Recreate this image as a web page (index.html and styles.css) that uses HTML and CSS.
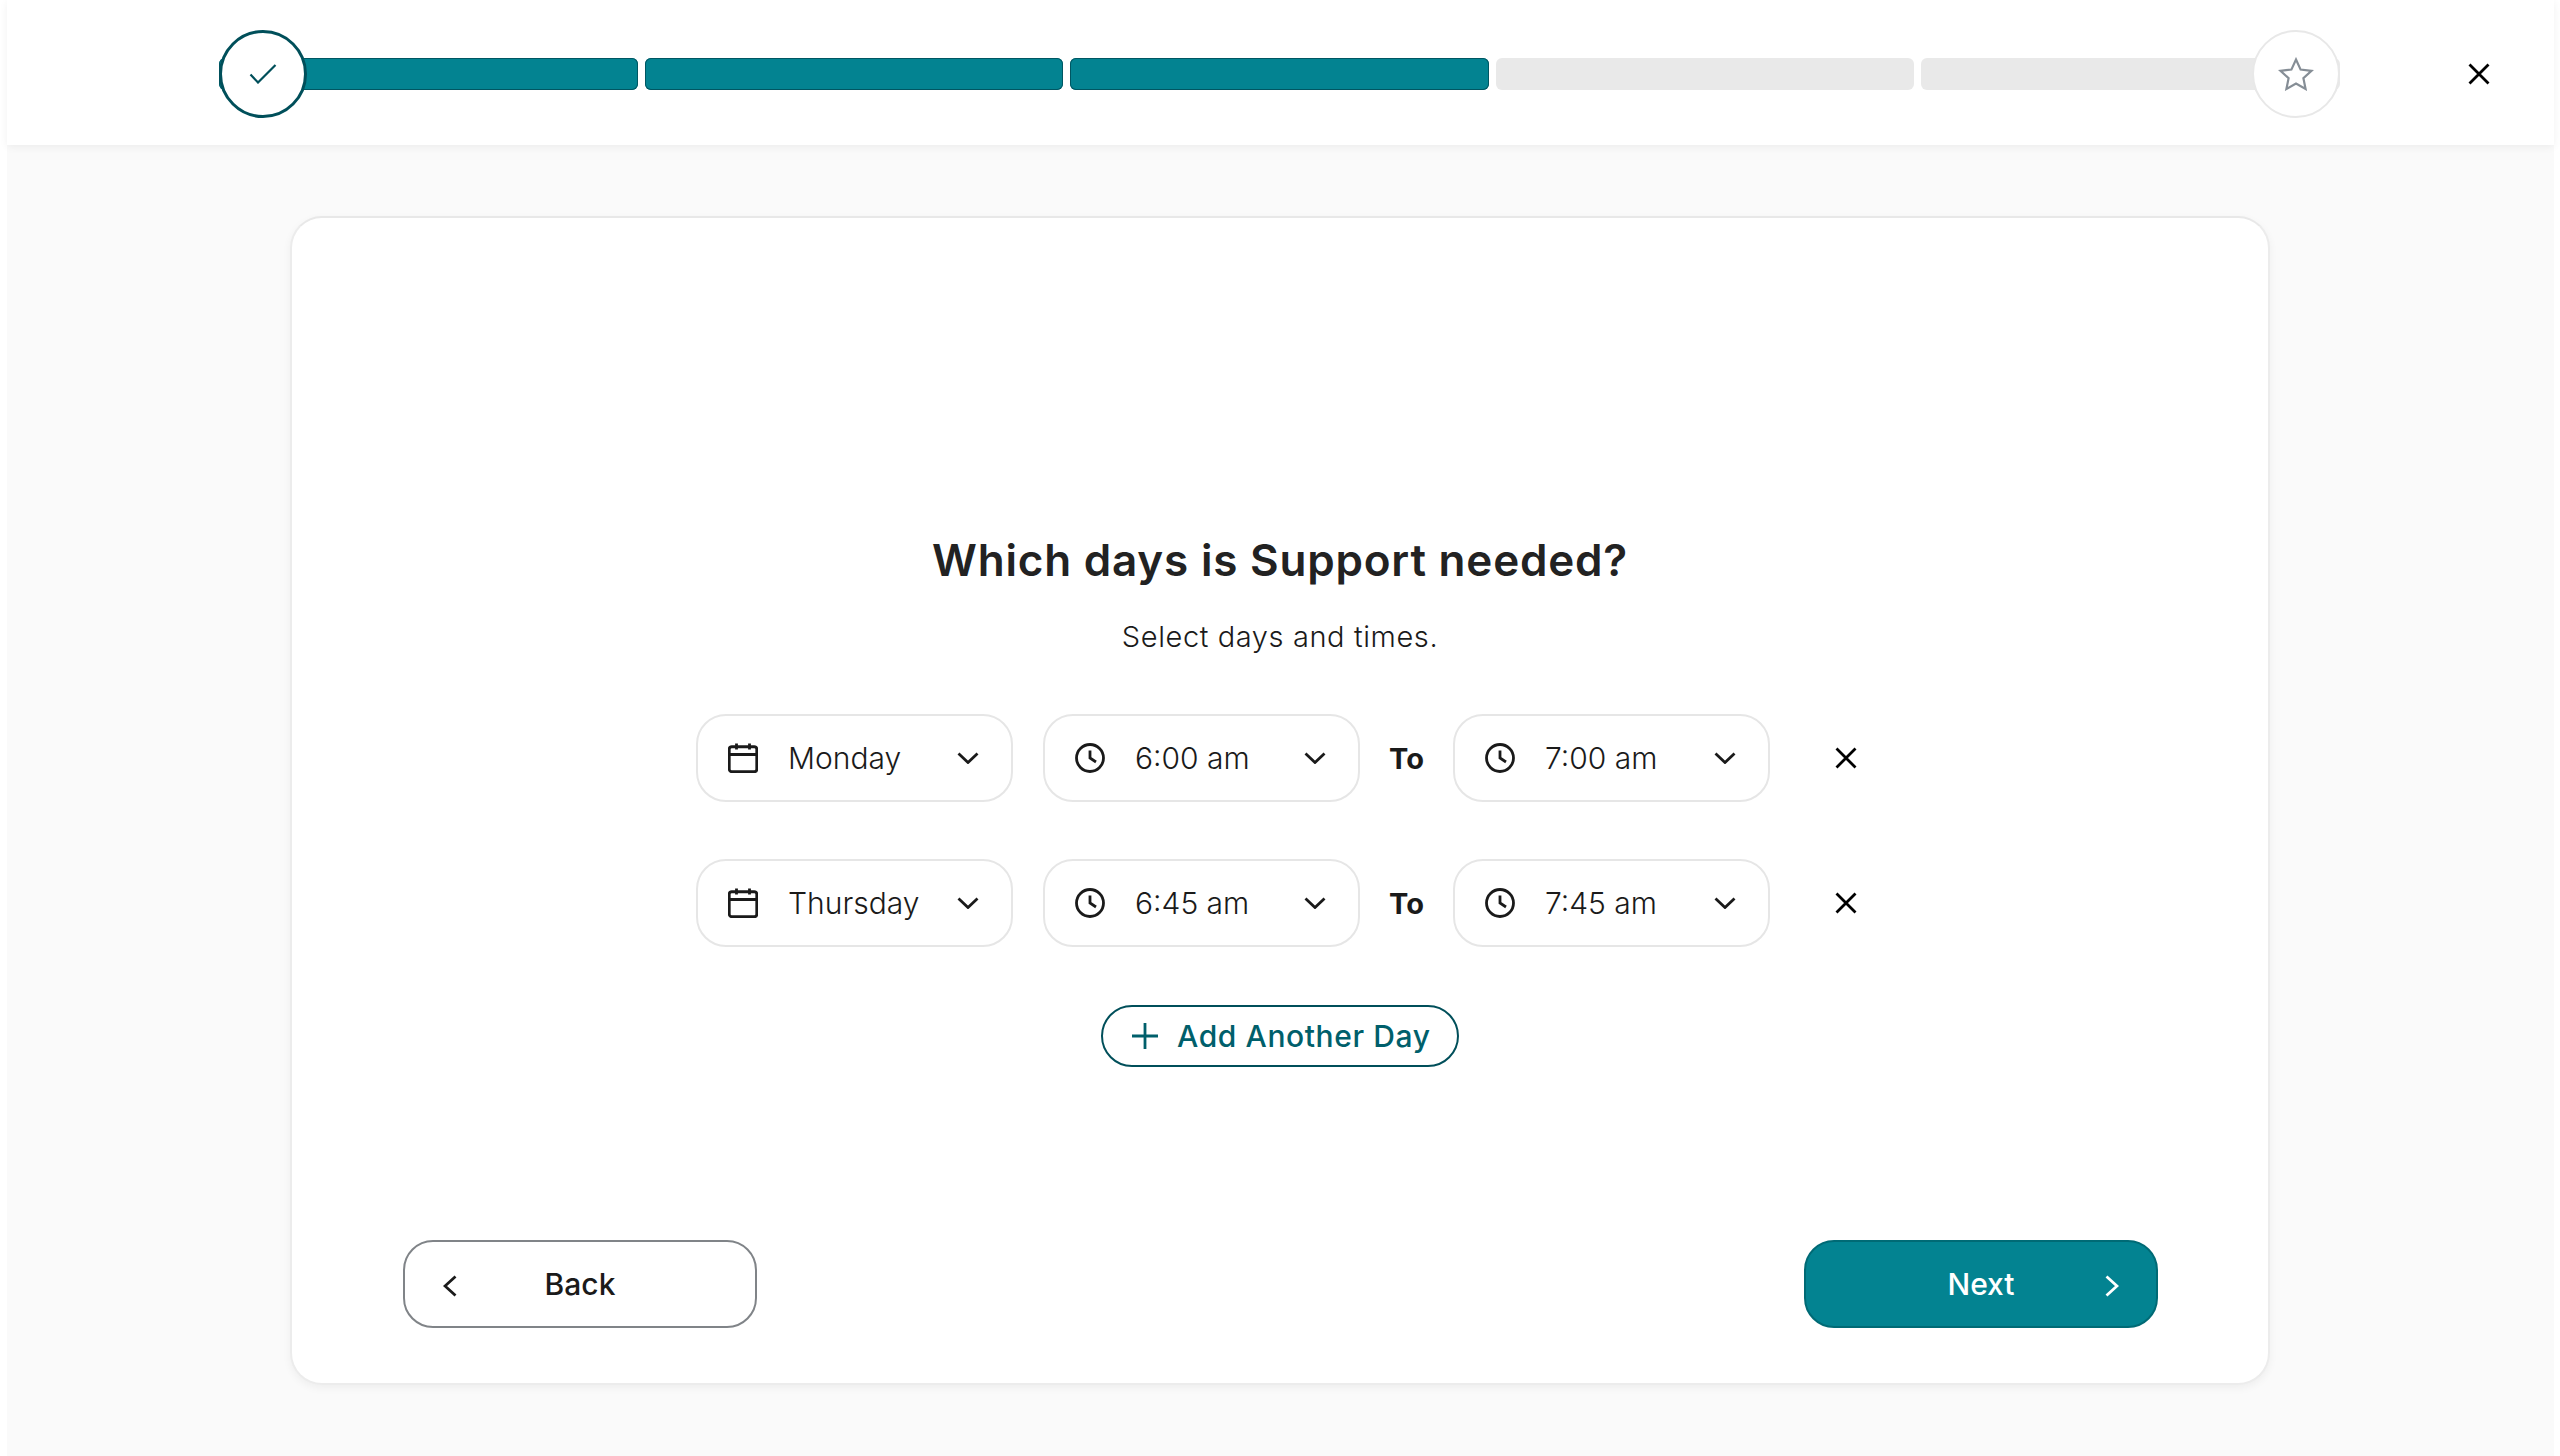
FILE: index.html
```html
<!DOCTYPE html>
<html lang="en">
<head>
    <meta charset="UTF-8">
    <meta name="viewport" content="width=device-width, initial-scale=1.0">
    <title>Which days is Support needed?</title>
    <link rel="stylesheet" href="styles.css">
</head>
<body>

<!-- Shared icons -->
<svg class="icon-defs" aria-hidden="true">
    <symbol id="i-calendar" viewBox="0 0 30 30">
        <rect x="1.25" y="3.75" width="27.5" height="25" rx="2.5"/>
        <path d="M1.25 11.5h27.5M8.5 0.5v6M21.5 0.5v6"/>
    </symbol>
    <symbol id="i-clock" viewBox="0 0 30 30">
        <circle cx="15" cy="15" r="13.5"/>
        <path d="M15 7.5v7.5l6 4"/>
    </symbol>
    <symbol id="i-chevron" viewBox="0 0 22 12">
        <path d="M1.5 1.5L11 10.5L20.5 1.5"/>
    </symbol>
    <symbol id="i-close" viewBox="0 0 22 22">
        <path d="M1.5 1.5L20.5 20.5M20.5 1.5L1.5 20.5"/>
    </symbol>
</svg>

<div class="page">
    <!-- Top bar with step progress -->
    <header class="topbar">
        <div class="progress">
            <div class="bar done"></div>
            <div class="bar done"></div>
            <div class="bar done"></div>
            <div class="bar"></div>
            <div class="bar"></div>
            <div class="step step-start">
                <svg width="28" height="20" viewBox="0 0 28 20"><path d="M1.5 10.5L9 18.5L26.5 1"/></svg>
            </div>
            <div class="step step-end">
                <svg width="36" height="34" viewBox="0 0 36 34"><path d="M18 2.5L22.6 12.6L33.5 13.8L25.4 21.2L27.6 32L18 26.6L8.4 32L10.6 21.2L2.5 13.8L13.4 12.6Z"/></svg>
            </div>
        </div>
        <button class="topbar-close" aria-label="Close">
            <svg width="22" height="22"><use href="#i-close"/></svg>
        </button>
    </header>

    <main class="card">
        <h1>Which days is Support needed?</h1>
        <p class="subtitle">Select days and times.</p>

        <div class="day-row">
            <div class="select">
                <svg class="select-icon" width="30" height="30"><use href="#i-calendar"/></svg>
                <span class="select-value">Monday</span>
                <svg class="select-chevron" width="22" height="12"><use href="#i-chevron"/></svg>
            </div>
            <div class="select">
                <svg class="select-icon" width="30" height="30"><use href="#i-clock"/></svg>
                <span class="select-value">6:00 am</span>
                <svg class="select-chevron" width="22" height="12"><use href="#i-chevron"/></svg>
            </div>
            <span class="to">To</span>
            <div class="select">
                <svg class="select-icon" width="30" height="30"><use href="#i-clock"/></svg>
                <span class="select-value">7:00 am</span>
                <svg class="select-chevron" width="22" height="12"><use href="#i-chevron"/></svg>
            </div>
            <button class="remove" aria-label="Remove">
                <svg width="22" height="22"><use href="#i-close"/></svg>
            </button>
        </div>

        <div class="day-row">
            <div class="select">
                <svg class="select-icon" width="30" height="30"><use href="#i-calendar"/></svg>
                <span class="select-value">Thursday</span>
                <svg class="select-chevron" width="22" height="12"><use href="#i-chevron"/></svg>
            </div>
            <div class="select">
                <svg class="select-icon" width="30" height="30"><use href="#i-clock"/></svg>
                <span class="select-value">6:45 am</span>
                <svg class="select-chevron" width="22" height="12"><use href="#i-chevron"/></svg>
            </div>
            <span class="to">To</span>
            <div class="select">
                <svg class="select-icon" width="30" height="30"><use href="#i-clock"/></svg>
                <span class="select-value">7:45 am</span>
                <svg class="select-chevron" width="22" height="12"><use href="#i-chevron"/></svg>
            </div>
            <button class="remove" aria-label="Remove">
                <svg width="22" height="22"><use href="#i-close"/></svg>
            </button>
        </div>

        <button class="add-day">
            <svg width="28" height="28" viewBox="0 0 28 28"><path d="M14 1v26M1 14h26"/></svg>
            Add Another Day
        </button>

        <div class="nav-buttons">
            <button class="nav-btn back">
                <svg width="14" height="22" viewBox="0 0 14 22"><path d="M12.5 1.5L2 11L12.5 20.5"/></svg>
                Back
            </button>
            <button class="nav-btn next">
                Next
                <svg width="14" height="22" viewBox="0 0 14 22"><path d="M1.5 1.5L12 11L1.5 20.5"/></svg>
            </button>
        </div>
    </main>
</div>

</body>
</html>
```

FILE: styles.css
```css
* {
    box-sizing: border-box;
}

body {
    margin: 0;
    background-color: #fff;
    font-family: Inter, "Open Sans", sans-serif;
    color: #1a1a1a;
}

button {
    font-family: inherit;
    background: none;
    border: none;
    padding: 0;
    cursor: pointer;
}

svg {
    fill: none;
    stroke: currentColor;
    stroke-width: 2.8;
    flex-shrink: 0;
}

.icon-defs {
    display: none;
}

.page {
    height: 1456px;
    margin: 0 6px 0 7px;
    background-color: #fafafa;
}

/* Top bar */
.topbar {
    display: flex;
    align-items: center;
    height: 145px;
    padding: 3px 0 0 212px;
    background-color: #fff;
    box-shadow: 0 2px 8px rgba(0, 0, 0, 0.06);
}

.progress {
    position: relative;
    display: flex;
    gap: 7px;
    width: 2121px;
}

.bar {
    flex: 1;
    height: 32px;
    border-radius: 6px;
    background-color: #e9e9e9;
}

.bar.done {
    background-color: #038391;
    box-shadow: inset 0 0 0 1px #005662;
}

.step {
    position: absolute;
    top: -28px;
    width: 88px;
    height: 88px;
    border-radius: 50%;
    background-color: #fff;
    display: flex;
    align-items: center;
    justify-content: center;
}

.step svg {
    stroke-width: 2.2;
}

.step-start {
    left: 0;
    border: 3px solid #004f5a;
    color: #004f5a;
}

.step-end {
    right: 0;
    border: 2px solid #e8e8e8;
    color: #868e96;
    padding-bottom: 1px;
}

.topbar-close {
    display: flex;
    margin-left: 128px;
    color: #000;
}

/* Card */
.card {
    display: flex;
    flex-direction: column;
    align-items: center;
    width: 1980px;
    height: 1169px;
    margin: 71px 0 0 283px;
    padding-top: 314px;
    background-color: #fff;
    border: 2px solid #ececec;
    border-top-color: #e8e8e8;
    border-radius: 32px;
    box-shadow: 0 3px 8px rgba(0, 0, 0, 0.05);
}

h1 {
    margin: 0;
    font-size: 44px;
    line-height: 56px;
    font-weight: 600;
    letter-spacing: 0.8px;
    color: #222;
}

.subtitle {
    margin: 29px 0 57px;
    font-size: 29px;
    line-height: 40px;
    font-weight: 300;
    letter-spacing: 0.6px;
}

.day-row {
    display: flex;
    align-items: center;
    align-self: flex-start;
    margin: 0 0 57px 404px;
}

.select {
    display: flex;
    align-items: center;
    width: 317px;
    height: 88px;
    padding: 0 32px 0 30px;
    border: 2px solid #e6e6e6;
    border-radius: 30px;
    background-color: #fff;
}

.select + .select {
    margin-left: 30px;
}

.select-icon {
    margin-right: 30px;
}

.select-value {
    flex: 1;
    font-size: 30px;
    font-weight: 300;
    white-space: nowrap;
}

.to {
    width: 93px;
    text-align: center;
    font-size: 29px;
    font-weight: 700;
}

.remove {
    display: flex;
    margin-left: 65px;
}

.add-day {
    display: flex;
    align-items: center;
    gap: 18px;
    width: 358px;
    height: 62px;
    margin-top: 1px;
    padding-left: 28px;
    border: 2px solid #004f5a;
    border-radius: 31px;
    font-size: 30px;
    font-weight: 500;
    letter-spacing: 0.6px;
    color: #005f6b;
    white-space: nowrap;
}

.nav-buttons {
    display: flex;
    justify-content: space-between;
    align-self: stretch;
    margin: 173px 110px 0 111px;
}

.nav-btn {
    position: relative;
    width: 354px;
    height: 88px;
    border-radius: 30px;
    font-size: 30px;
    font-weight: 500;
}

.nav-btn svg {
    position: absolute;
    top: 33px;
}

.back {
    border: 2px solid #808488;
    color: #1a1a1a;
}

.back svg {
    left: 38px;
}

.next {
    border: 2px solid #006a75;
    background-color: #038391;
    color: #fff;
}

.next svg {
    right: 37px;
}
```
